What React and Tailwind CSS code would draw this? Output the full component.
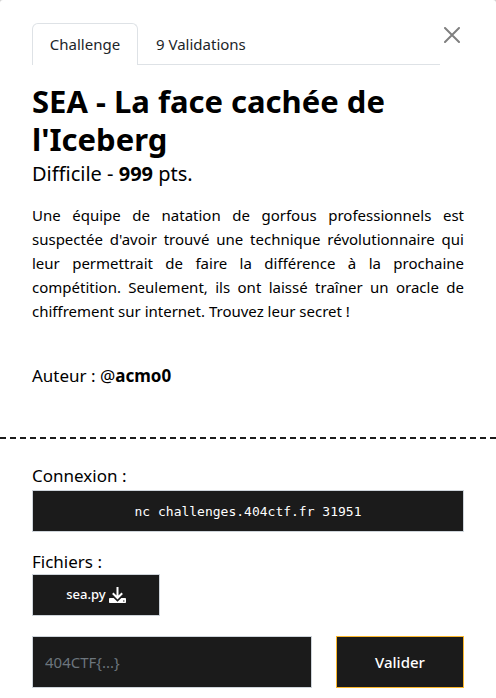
import React from "react";

function DownloadIcon() {
  return (
    <svg viewBox="0 0 17 16" className="h-4 w-[17px]" fill="none" aria-hidden="true">
      <rect x="0" y="11" width="17" height="5" rx="0.8" fill="#fff" />
      <path d="M3 6.500l5.500 5.500L14 6.500" stroke="#1b1b1b" strokeWidth="4" />
      <path d="M8.500 0v11M3.800 6.300l4.700 4.700 4.700-4.700" stroke="#fff" strokeWidth="2" />
      <path d="M14 14h1.500" stroke="#1b1b1b" />
    </svg>
  );
}

function CloseIcon() {
  return (
    <svg viewBox="0 0 16 16" className="size-4" fill="none" aria-hidden="true">
      <path d="M1 1l14 14M15 1L1 15" stroke="#808080" strokeWidth="2" strokeLinecap="round" />
    </svg>
  );
}

export default function App() {
  return (
    <div className="bg-[#d1d1d1]">
      <main className="rounded-t-[3px] bg-white pb-[10px] font-['Noto_Sans',sans-serif] text-black">
        <header className="flex items-start px-8 pt-[23px]">
          <nav role="tablist" className="flex h-[42px] flex-1 text-[15px] leading-6 text-[#212529]">
            <button
              role="tab"
              aria-selected="true"
              className="w-[106px] rounded-t-md border border-b-0 border-[#dee2e6] pb-0.5"
            >
              Challenge
            </button>
            <button
              role="tab"
              aria-selected="false"
              className="flex-1 border-b border-[#dee2e6] pl-[18px] text-left"
            >
              9 Validations
            </button>
          </nav>
          <button aria-label="Fermer" className="flex h-6 w-6 items-center justify-center">
            <CloseIcon />
          </button>
        </header>

        <section className="border-b-2 border-dashed border-[#1b1b1b] px-8 pt-[17px] pb-[49px]">
          <h1 className="text-[31px] leading-[38px] font-bold">SEA - La face cachée de l'Iceberg</h1>
          <p className="text-[20px] leading-8">
            Difficile - <strong>999</strong> pts.
          </p>
          <p className="mt-[13px] text-justify text-[15px] leading-6">
            Une équipe de natation de gorfous professionnels est suspectée d'avoir trouvé une technique
            révolutionnaire qui leur permettrait de faire la différence à la prochaine compétition.
            Seulement, ils ont laissé traîner un oracle de chiffrement sur internet. Trouvez leur secret !
          </p>
          <p className="mt-[41px] text-[17px] leading-6">
            Auteur : @<strong>acmo0</strong>
          </p>
        </section>

        <section className="px-8 pt-[25px]">
          <h2 className="text-[17px] leading-6">Connexion :</h2>
          <button className="mt-0.5 block h-[42px] w-full border border-[#ced4da] bg-[#1b1b1b] pt-0.5 font-['DejaVu_Sans_Mono',monospace] text-[13px] text-white">
            nc challenges.404ctf.fr 31951
          </button>
          <h2 className="mt-[18px] text-[17px] leading-6">Fichiers :</h2>
          <div className="grid grid-cols-3 gap-x-6">
            <button className="flex h-[42px] items-center justify-center gap-[3px] border border-[#ced4da] bg-[#1b1b1b] text-[13px] font-medium text-white">
              sea.py
              <DownloadIcon />
            </button>
          </div>
          <form className="mt-5 grid grid-cols-3 gap-x-6" onSubmit={(e) => e.preventDefault()}>
            <input
              type="text"
              aria-label="Flag"
              placeholder="404CTF{...}"
              className="col-span-2 h-[52px] min-w-0 border border-[#ced4da] bg-[#1b1b1b] px-3 text-[15px] text-white placeholder:text-[#6c757d]"
            />
            <button className="h-[52px] border border-[#fbb72c] bg-[#1b1b1b] text-[15px] font-medium text-white">
              Valider
            </button>
          </form>
        </section>
      </main>
    </div>
  );
}
